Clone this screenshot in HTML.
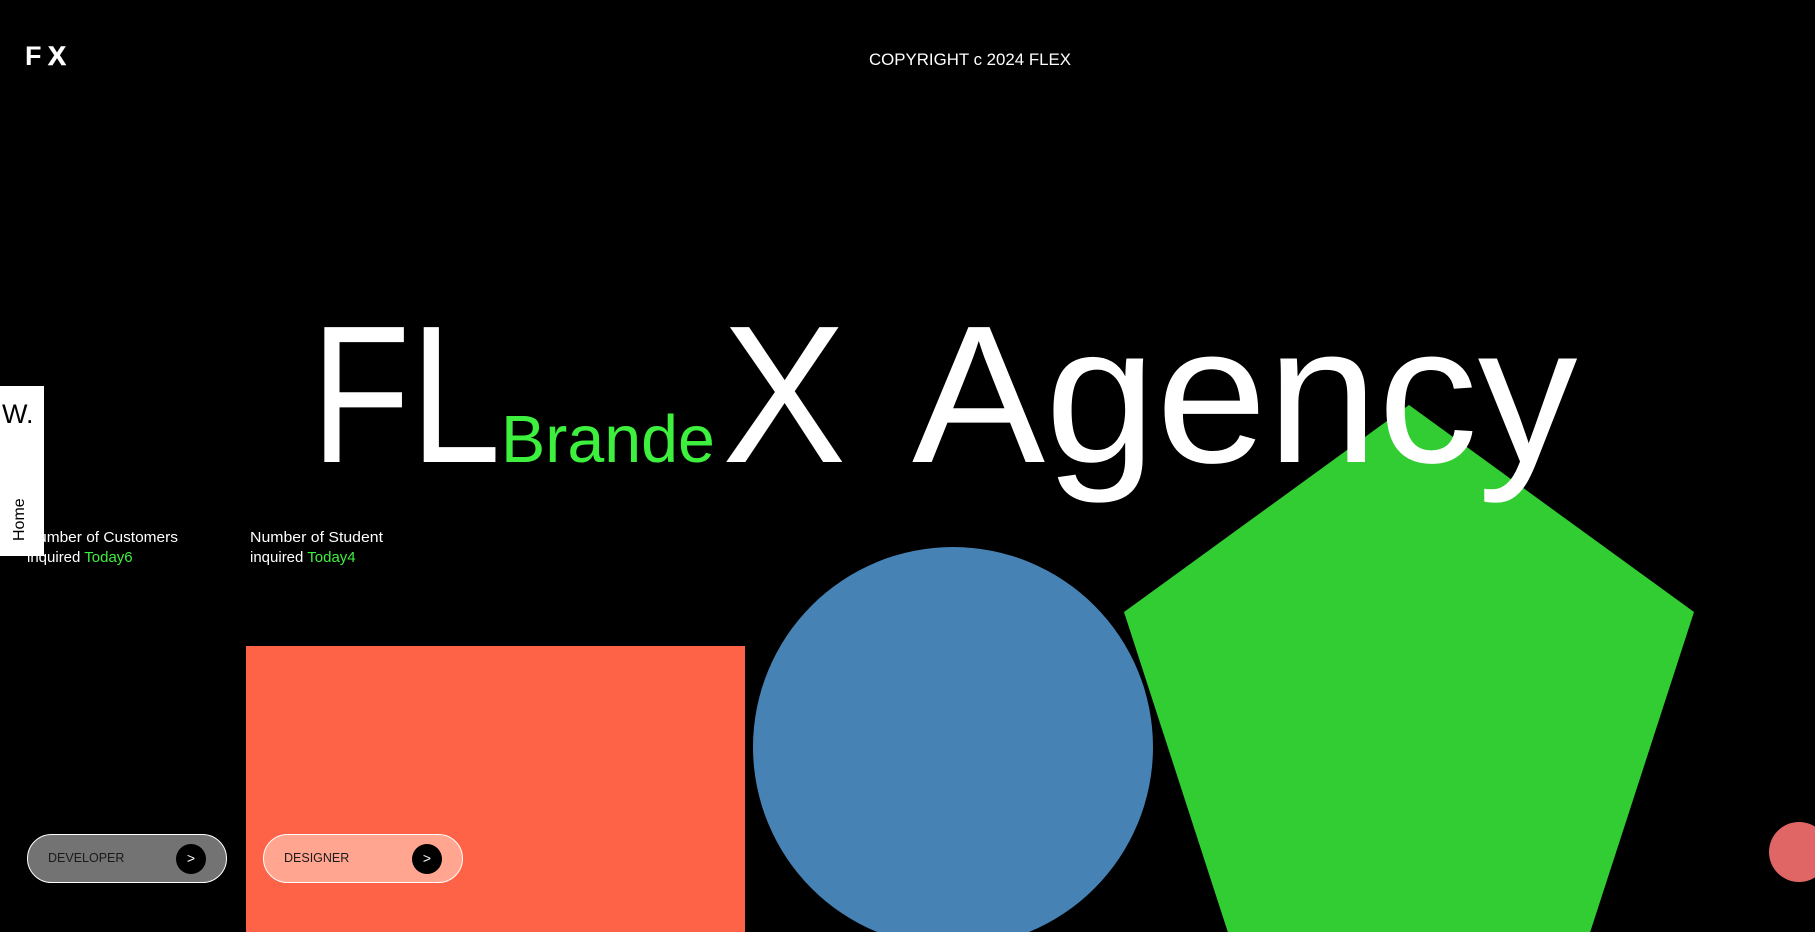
<!DOCTYPE html>
<html><head><meta charset="utf-8"><style>
html,body{margin:0;padding:0;background:#000;width:1815px;height:932px;overflow:hidden;position:relative}
svg{position:absolute;left:0;top:0}
.btn{position:absolute;top:834px;width:198px;height:47px;border:1px solid #fff;border-radius:25px;font-family:"Liberation Sans",sans-serif;font-size:12.5px;color:#1a1a1a;box-sizing:content-box}
.btn span{position:absolute;left:20px;top:16px}
.btn i{position:absolute;right:20px;top:9px;width:30px;height:30px;border-radius:50%;background:#000;color:#fff;font-style:normal;font-size:14px;text-align:center;line-height:29px}
</style></head><body>
<svg width="1815" height="932" viewBox="0 0 1815 932">
<rect x="246" y="646" width="499" height="300" fill="#ff6347"/>
<circle cx="953" cy="747" r="200" fill="#4682b4"/>
<polygon points="1409,405 1694,612 1585,948 1233,948 1124,612" fill="#32cd32"/>
<circle cx="1799" cy="852" r="30" fill="#e06666"/>
<g font-family="Liberation Sans, sans-serif" fill="#fff">
<text x="25" y="65" font-size="27" font-weight="bold">F</text>
<text x="48" y="65" font-size="27" font-weight="bold" stroke="#fff" stroke-width="0.6">X</text>
<text x="869" y="65" font-size="17" textLength="202" lengthAdjust="spacingAndGlyphs">COPYRIGHT c 2024 FLEX</text>
<text transform="translate(311,462) scale(0.83,1)" font-size="196">FL</text>
<text transform="translate(501,462) scale(0.99,1)" font-size="67" fill="#3ef03e">Brande</text>
<text transform="translate(722,462) scale(0.95,1)" font-size="196">X</text>
<text transform="translate(912,462) scale(1.018,1)" font-size="196">Agency</text>
<g font-size="15">
<text x="27" y="542" textLength="151" lengthAdjust="spacingAndGlyphs">Number of Customers</text>
<text x="27" y="562">inquired <tspan fill="#3ef03e">Today6</tspan></text>
<text x="250" y="542" textLength="133" lengthAdjust="spacingAndGlyphs">Number of Student</text>
<text x="250" y="562">inquired <tspan fill="#3ef03e">Today4</tspan></text>
</g>
</g>
<rect x="0" y="386" width="44" height="170" fill="#fff"/>
<g font-family="Liberation Sans, sans-serif" fill="#000">
<text x="2" y="423" font-size="27">W.</text>
<text transform="translate(24,541) rotate(-90)" font-size="16">Home</text>
</g>
</svg>
<div class="btn" style="left:27px;background:#737373"><span>DEVELOPER</span><i>&gt;</i></div>
<div class="btn" style="left:263px;background:#ffa590"><span>DESIGNER</span><i>&gt;</i></div>
</body></html>
